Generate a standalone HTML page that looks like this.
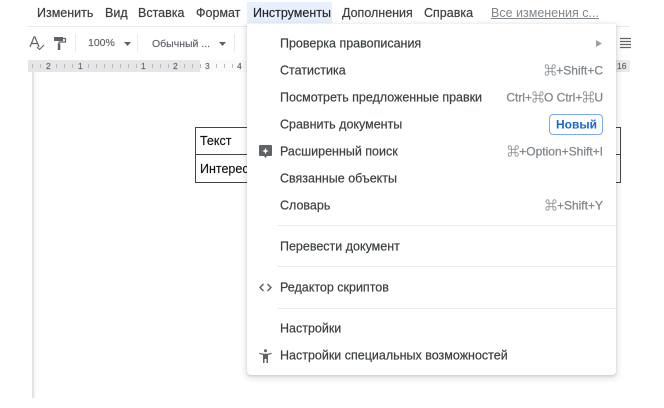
<!DOCTYPE html>
<html><head><meta charset="utf-8">
<style>
html,body{margin:0;padding:0;background:#fff}
#p{position:relative;width:664px;height:408px;overflow:hidden;background:#fff;font-family:"Liberation Sans","Noto Sans CJK SC",sans-serif;filter:blur(.35px)}
#p div,#p span.a{position:absolute}
.t{white-space:nowrap;line-height:16px;height:16px}
.mb{top:5px;font-size:12.5px;color:#3c4043;-webkit-text-stroke:.2px #3c4043}
.m{left:280px;font-size:12.5px;color:#3c4043;-webkit-text-stroke:.2px #3c4043;transform:translateY(.5px)}
.s{right:61px;font-size:12px;color:#80868b;text-align:right;-webkit-text-stroke:.25px #80868b;transform:translateY(.5px)}
.sep{left:278px;width:338px;height:1px;background:#e8eaed}
.r{top:60px;font-size:8.5px;color:#5f6368;line-height:12px;height:12px;-webkit-text-stroke:.15px #5f6368}
.tk{top:64px;height:4px;background:repeating-linear-gradient(90deg,#b9bbbe 0,#b9bbbe 1px,transparent 1px,transparent 8px)}
</style></head><body>
<div id="p">
<div class="t mb" style="left:37px">Изменить</div>
<div class="t mb" style="left:105px">Вид</div>
<div class="t mb" style="left:138px">Вставка</div>
<div class="t mb" style="left:196px">Формат</div>
<div style="left:247px;top:2px;width:85px;height:21px;background:#e8f0fe"></div>
<div class="t mb" style="left:253px;color:#202124">Инструменты</div>
<div class="t mb" style="left:342px">Дополнения</div>
<div class="t mb" style="left:424px">Справка</div>
<div class="t mb" style="left:491px;color:#80868b;-webkit-text-stroke:0;text-decoration:underline">Все изменения с...</div>
<div style="left:28px;top:26px;width:602px;height:1px;background:#e8eaed"></div>

<svg style="position:absolute;left:28px;top:34px" width="20" height="18" viewBox="0 0 20 18"><path d="M2 13L6 3h1l4 10M3.500 9.500h6" fill="none" stroke="#5f6368" stroke-width="1.200"/><path d="M9 13l2.500 2.500L16 11" fill="none" stroke="#5f6368" stroke-width="1.100"/></svg>
<svg style="position:absolute;left:53px;top:36px" width="14" height="15" viewBox="0 0 14 15"><path d="M1 1h9v4H1z" fill="#5f6368"/><path d="M10 2.500h2.500v3.500H6v2" fill="none" stroke="#5f6368" stroke-width="1.200"/><path d="M4.800 7.500h2.500V14H4.800z" fill="#5f6368"/></svg>
<div style="left:75px;top:34px;width:1px;height:18px;background:#e8eaed"></div>
<div class="t" style="left:88px;top:35px;font-size:10.500px;color:#5f6368;-webkit-text-stroke:.15px #5f6368">100%</div>
<svg style="position:absolute;left:124px;top:42px" width="7" height="4"><path d="M0 0h7L3.500 4z" fill="#5f6368"/></svg>
<div style="left:137px;top:34px;width:1px;height:18px;background:#e8eaed"></div>
<div class="t" style="left:152px;top:36px;font-size:10.500px;color:#5f6368;-webkit-text-stroke:.15px #5f6368">Обычный ...</div>
<svg style="position:absolute;left:219px;top:42px" width="7" height="4"><path d="M0 0h7L3.500 4z" fill="#5f6368"/></svg>
<div style="left:234px;top:34px;width:1px;height:18px;background:#e8eaed"></div>
<svg style="position:absolute;left:619px;top:37px" width="12" height="13"><path d="M1 1.500h11M1 4.500h11M1 7.500h11M1 10.500h11" stroke="#5f6368" stroke-width="1.200"/></svg>

<div style="left:28px;top:60px;width:172px;height:12px;background:#e5e6e8"></div>
<div style="left:200px;top:60px;width:47px;height:12px;background:#fafafa"></div>
<div style="left:612px;top:60px;width:18px;height:12px;background:#e8e9ea"></div>
<div class="tk" style="left:32px;width:215px"></div>
<div class="t r" style="left:46px;background:#e5e6e8;padding:0 2px;margin-left:-2px">2</div>
<div class="t r" style="left:78px;background:#e5e6e8;padding:0 2px;margin-left:-2px">1</div>
<div class="t r" style="left:141px;background:#e5e6e8;padding:0 2px;margin-left:-2px">1</div>
<div class="t r" style="left:173px;background:#e5e6e8;padding:0 2px;margin-left:-2px">2</div>
<div class="t r" style="left:205px;background:#fafafa;padding:0 2px;margin-left:-2px">3</div>
<div class="t r" style="left:237px;background:#fafafa;padding:0 2px;margin-left:-2px">4</div>
<div class="t r" style="left:617px">16</div>

<div style="left:32px;top:72px;width:2px;height:326px;background:#e3e3e3"></div>
<div style="left:34px;top:72px;width:2px;height:326px;background:#f7f7f7"></div>

<div style="left:195px;top:127px;width:424px;height:54px;border:1px solid #444"></div>
<div style="left:195px;top:154px;width:425px;height:1px;background:#444"></div>
<div class="t" style="left:200px;top:133px;font-size:12.500px;color:#111;-webkit-text-stroke:.15px #111">Текст</div>
<div class="t" style="left:200px;top:161px;font-size:12.500px;color:#111;-webkit-text-stroke:.15px #111">Интересный</div>

<div style="left:247px;top:24px;width:369px;height:351px;background:#fff;border-radius:0 0 4px 4px;box-shadow:0 2px 6px 2px rgba(60,64,67,.13),0 1px 2px rgba(60,64,67,.18)"></div>

<div class="t m" style="top:35px">Проверка правописания</div>
<svg style="position:absolute;left:596px;top:40px" width="7" height="7"><path d="M0 0l6 3.500L0 7z" fill="#9aa0a6"/></svg>
<div class="t m" style="top:62px">Статистика</div>
<div class="t s" style="top:62px">⌘+Shift+C</div>
<div class="t m" style="top:89px;letter-spacing:-.02px">Посмотреть предложенные правки</div>
<div class="t s" style="top:89px">Ctrl+⌘O Ctrl+⌘U</div>
<div class="t m" style="top:116px">Сравнить документы</div>
<div style="left:549px;top:114px;width:52px;height:19px;border:1px solid #7baaf0;border-radius:4px"></div>
<div class="t" style="left:556px;top:116px;font-size:12px;font-weight:700;color:#1a66d2;transform:translateY(.5px)">Новый</div>
<svg style="position:absolute;left:259px;top:145px" width="13" height="13" viewBox="0 0 13 13"><path d="M1 0h11a1 1 0 0 1 1 1v9a1 1 0 0 1-1 1H8l-1.500 2L5 11H1a1 1 0 0 1-1-1V1a1 1 0 0 1 1-1z" fill="#5f6368"/><path d="M6.500 2.800l.9 2.300 2.300.9-2.300.9-.9 2.300-.9-2.300-2.300-.9 2.300-.9z" fill="#fff"/></svg>
<div class="t m" style="top:143px">Расширенный поиск</div>
<div class="t s" style="top:143px">⌘+Option+Shift+I</div>
<div class="t m" style="top:170px">Связанные объекты</div>
<div class="t m" style="top:197px">Словарь</div>
<div class="t s" style="top:197px">⌘+Shift+Y</div>
<div class="sep" style="top:225px"></div>
<div class="t m" style="top:238px">Перевести документ</div>
<div class="sep" style="top:266px"></div>
<svg style="position:absolute;left:259px;top:283px" width="13" height="9" viewBox="0 0 13 9"><path d="M4.500 1L1 4.500 4.500 8M8.500 1L12 4.500 8.500 8" fill="none" stroke="#5f6368" stroke-width="1.500"/></svg>
<div class="t m" style="top:279px">Редактор скриптов</div>
<div class="sep" style="top:308px"></div>
<div class="t m" style="top:320px">Настройки</div>
<svg style="position:absolute;left:259px;top:349px" width="13" height="14" viewBox="0 0 13 14"><circle cx="6.500" cy="1.700" r="1.500" fill="#5f6368"/><path d="M.5 3.800c2 .7 3.700 1 6 1s4-.3 6-1l.3 1.100L9 6v8H7.500V10h-2v4H4V6L.2 4.900z" fill="#5f6368"/></svg>
<div class="t m" style="top:347px">Настройки специальных возможностей</div>
</div>
</body></html>
